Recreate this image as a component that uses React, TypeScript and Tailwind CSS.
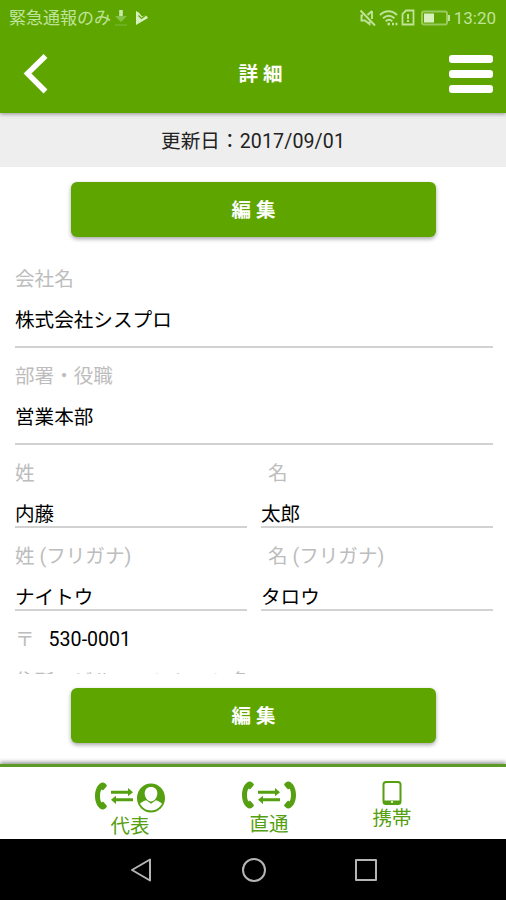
import type { ReactNode } from 'react';

const StatusBar = () => (
  <div className="flex h-[35px] items-center justify-between pl-[9px] pr-[10px] text-[#bfe39a]">
    <div className="flex items-center">
      <span className="text-[17px] leading-[36px] whitespace-nowrap">緊急通報のみ</span>
      <svg className="ml-[3px] h-[18px] w-[14px]" viewBox="0 0 14 18">
        <path d="M5 1h4v6h4l-6 6-6-6h4z" fill="#86c24a" />
        <path d="M5.300 1h3.400v6H5.300z" fill="#c8e8a8" />
        <path d="M1 15.500h12v1H1z" fill="#7dba3c" />
      </svg>
      <svg className="ml-[7px] h-[14px] w-[14px]" viewBox="0 0 14 14">
        <path d="M1 0l3 1.700 3 3.800L11 4l2 3L1 14z" fill="#d8f0c0" />
        <path d="M3.500 4.500l3 3L13 2.500" fill="none" stroke="#5fa500" strokeWidth="1.200" />
      </svg>
    </div>
    <div className="flex items-center">
      <svg className="h-[18px] w-[18px]" viewBox="0 0 18 18" fill="none" stroke="currentColor" strokeWidth="1.900">
        <path d="M1.500 1.500l14.500 15M13 2v8M13 2L8.500 6M4 6.500H2.500v5H6l4.500 3.500v-2.500" />
      </svg>
      <svg className="ml-[2px] h-[18px] w-[20px]" viewBox="0 0 20 18" fill="none" stroke="currentColor" strokeWidth="1.900">
        <path d="M1 6c5-5 12-5 17 0M4 9.300c4-3.700 7.500-3.700 11.500 0M6.700 12.300c2-1.900 4.600-1.900 6.600 0" />
        <path d="M8.500 15h2.500M13 15h2M16.500 15h2" strokeWidth="2.400" />
      </svg>
      <svg className="ml-[2px] h-[17px] w-[14px]" viewBox="0 0 14 17" fill="none" stroke="currentColor" strokeWidth="1.800">
        <path d="M5 1.500h7.500v14h-11V5z" />
        <path d="M7 5v5M7 11v2" strokeWidth="2" />
      </svg>
      <svg className="ml-[6px] h-[16px] w-[29px]" viewBox="0 0 29 16" fill="none" stroke="currentColor">
        <rect x="1" y="1.500" width="25" height="13" rx="2" strokeWidth="2" opacity="0.6" />
        <path d="M28 5v6" strokeWidth="2" />
        <rect x="3" y="3.500" width="10" height="9" fill="#d8f0c0" stroke="none" />
      </svg>
      <span className="ml-[4px] text-[17px] leading-[36px]">13:20</span>
    </div>
  </div>
);

const Header = () => (
  <header className="relative z-10 h-[113px] bg-[#5fa500] shadow-[0_1px_4px_rgba(0,0,0,0.4)]">
    <StatusBar />
    <div className="flex h-[78px] items-center justify-between pl-[23px] pr-[13px]">
      <svg className="h-[40px] w-[44px]" viewBox="0 0 44 40" fill="none" stroke="#fff" strokeWidth="5.500">
        <path d="M22.500 2L4.500 19.500l18 18" />
      </svg>
      <h1 className="pt-[2px] pl-[10px] text-[19.500px] font-bold tracking-[5px] text-white">詳細</h1>
      <div className="flex w-[44px] flex-col gap-[7px]">
        <div className="h-2 rounded-[3px] bg-white" />
        <div className="h-2 rounded-[3px] bg-white" />
        <div className="h-2 rounded-[3px] bg-white" />
      </div>
    </div>
  </header>
);

const EditButton = () => (
  <button className="ml-[71px] block h-[55px] w-[365px] shrink-0 rounded-[6px] bg-[#5fa500] pt-[2px] pl-[5px] text-[19.500px] font-bold tracking-[5px] text-white shadow-[0_2px_4px_rgba(0,0,0,0.35)]">
    編集
  </button>
);

const Field = ({ label, value }: { label: string; value: string }) => (
  <div className="mb-[7px] h-[90px] border-b-2 border-[#d2d2d2]">
    <p className="leading-[44px] text-[#bdbdbd]">{label}</p>
    <p className="leading-[38px]">{value}</p>
  </div>
);

const HalfField = ({ label, value, indent }: { label: string; value: string; indent?: boolean }) => (
  <div className="h-[75px] flex-1 border-b-2 border-[#d2d2d2]">
    <p className={indent ? 'pl-[7px] leading-[42px] text-[#bdbdbd]' : 'leading-[42px] text-[#bdbdbd]'}>{label}</p>
    <p className="leading-[39px]">{value}</p>
  </div>
);

const Handset = ({ flip }: { flip?: boolean }) => (
  <svg className={flip ? 'h-[28px] w-[12px] -scale-x-100' : 'h-[28px] w-[12px]'} viewBox="0 0 12 28" fill="#55a010">
    <path d="M7 .5C2.500 2 0 8 0 14s2.500 12 7 13.500c1.300.3 2.300-.2 3.200-1l1.300-1.300c.6-.6.4-1.400-.2-1.900L8.700 20.200c-.7-.6-1.600-.5-2.300.2C5.400 18.500 5 16.500 5 14s.4-4.500 1.400-6.400c.7.700 1.600.8 2.300.2l2.600-3.100c.6-.5.8-1.300.2-1.900L10.200 1.500C9.300.7 8.300.2 7 .5z" />
  </svg>
);

const Arrows = () => (
  <svg className="h-[16px] w-[22px]" viewBox="0 0 22 16" fill="#55a010">
    <path d="M0 2.700h17V0l5 4.200-5 4.100V5.700H0z" />
    <path d="M22 13.300H5V16l-5-4.200 5-4.100v2.600h17z" />
  </svg>
);

const PersonIcon = () => (
  <svg className="h-[30px] w-[28px]" viewBox="0 0 28 30">
    <ellipse cx="14" cy="15" rx="14" ry="14.500" fill="#55a010" />
    <path d="M3 20.500c2-1.600 4-2.500 6.300-3.200l4.700 3.500 4.700-3.500c2.300.7 4.300 1.600 6.300 3.200-2 4.200-6 7-11 7s-9-2.800-11-7z" fill="#fff" />
    <path d="M14 4c4 0 6.300 2.700 6.300 6.300 0 4.200-3 8.200-6.300 8.200s-6.300-4-6.300-8.200C7.700 6.700 10 4 14 4z" fill="#fff" />
  </svg>
);

const PhoneTab = ({ label, children }: { label: string; children: ReactNode }) => (
  <div className="flex flex-col items-center text-[#55a010]">
    {children}
    <span className="text-[19.500px] leading-[28px]">{label}</span>
  </div>
);

const Footer = () => (
  <footer className="flex h-[75px] shrink-0 border-t-[3px] border-[#5c9c26] bg-white shadow-[0_-2px_4px_rgba(0,0,0,0.4)]">
    <div className="w-[70px] ml-[95px] pt-[16px]">
      <PhoneTab label="代表">
        <div className="flex h-[30px] items-center">
          <div className="mb-[4px]"><Handset /></div>
          <div className="mb-[5px] ml-[4px]"><Arrows /></div>
          <div className="ml-[4px]"><PersonIcon /></div>
        </div>
      </PhoneTab>
    </div>
    <div className="ml-[77px] w-[54px] pt-[14px]">
      <PhoneTab label="直通">
        <div className="flex h-[30px] items-center">
          <div className="mb-[2px]"><Handset /></div>
          <div className="mx-[4px]"><Arrows /></div>
          <div className="mb-[2px]"><Handset flip /></div>
        </div>
      </PhoneTab>
    </div>
    <div className="ml-[76px] w-[40px] pt-[14px]">
      <PhoneTab label="携帯">
        <svg className="h-[24px] w-[20px]" viewBox="0 0 20 24">
          <rect x="1.500" y="1" width="17" height="22" rx="2.500" fill="#fff" stroke="#55a010" strokeWidth="2" />
          <path d="M1.500 19.500h17V22h-17z" fill="#55a010" />
          <circle cx="10" cy="21" r="1.100" fill="#fff" />
        </svg>
      </PhoneTab>
    </div>
  </footer>
);

const NavigationBar = () => (
  <div className="flex h-[61px] shrink-0 items-center justify-between bg-black pl-[129px] pr-[129px]">
    <svg className="h-[26px] w-[24px]" viewBox="0 0 24 26" fill="none" stroke="#b5b5b5" strokeWidth="2">
      <path d="M21 2.500v21L3 13z" strokeLinejoin="round" />
    </svg>
    <div className="h-[24px] w-[24px] rounded-full border-2 border-[#b5b5b5]" />
    <div className="h-[22px] w-[22px] rounded-[1px] border-2 border-[#b5b5b5]" />
  </div>
);

const App = () => (
  <div className="flex h-[900px] w-[506px] flex-col overflow-hidden bg-white font-[Roboto,'Noto_Sans_CJK_JP',sans-serif] text-[19.600px] text-black">
    <Header />
    <div className="h-[54px] shrink-0 bg-[#eeeeee] text-center leading-[58px] tracking-[0.100px] text-[#222]">
      更新日：2017/09/01
    </div>
    <main className="h-[507px] shrink-0 overflow-hidden pt-[15px]">
      <EditButton />
      <div className="pr-[13px] pl-[15px]">
        <div className="mt-[21px]">
          <Field label="会社名" value="株式会社シスプロ" />
          <Field label="部署・役職" value="営業本部" />
        </div>
        <div className="mt-2 flex gap-[14px]">
          <HalfField label="姓" value="内藤" />
          <HalfField label="名" value="太郎" indent />
        </div>
        <div className="mt-2 flex gap-[14px]">
          <HalfField label="姓 (フリガナ)" value="ナイトウ" />
          <HalfField label="名 (フリガナ)" value="タロウ" indent />
        </div>
        <div className="mt-[9px] flex gap-[14px] leading-[40px]">
          <span className="text-[#bdbdbd]">〒</span>
          <span>530-0001</span>
        </div>
        <p className="leading-[43px] text-[#bdbdbd]">住所・ビル・マンション名</p>
      </div>
    </main>
    <div className="h-[90px] shrink-0 pt-[14px]">
      <EditButton />
    </div>
    <Footer />
    <NavigationBar />
  </div>
);

export default App;
